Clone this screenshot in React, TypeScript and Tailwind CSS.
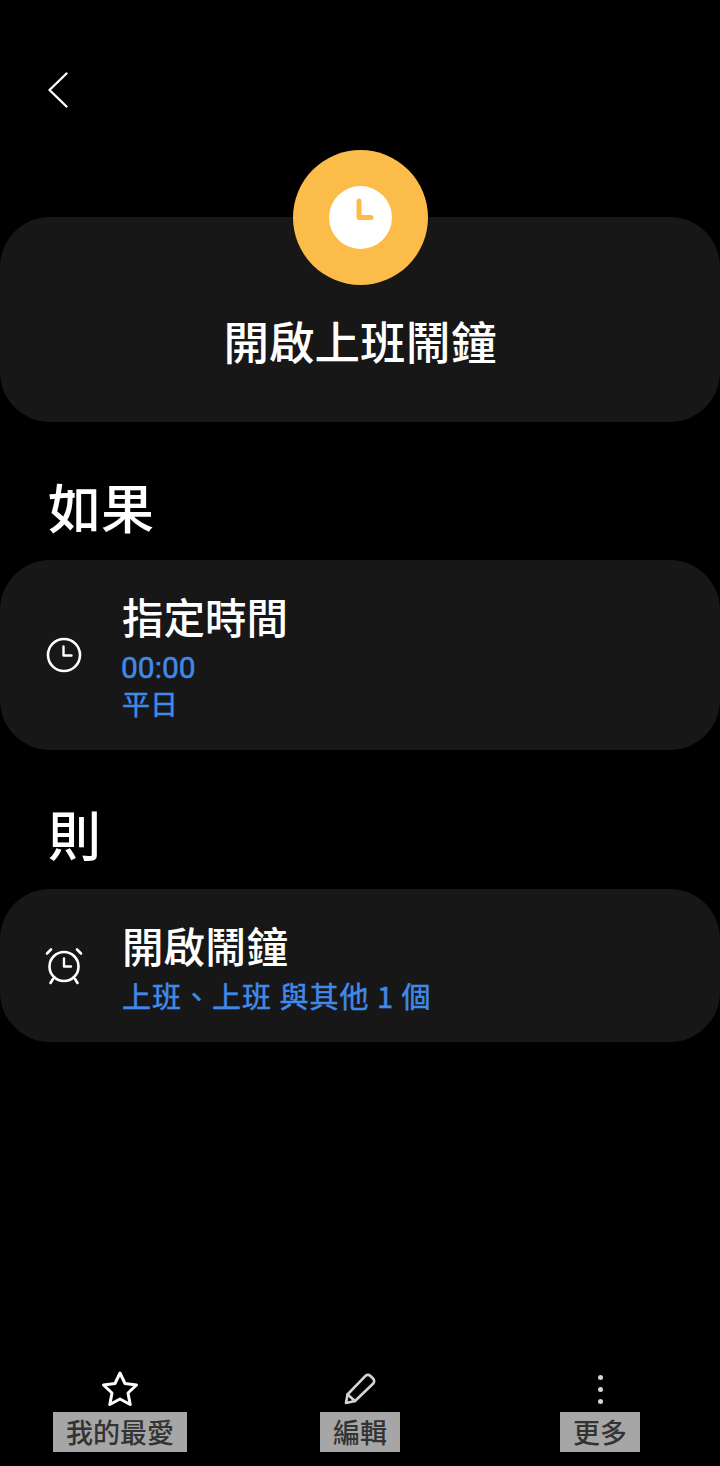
const cjk = "font-['Noto_Sans_CJK_TC','Noto_Sans',sans-serif]";

function ClockIcon() {
	return (
		<svg width="36" height="36" viewBox="0 0 36 36" fill="none" stroke="white" strokeWidth="2.6" strokeLinecap="round" strokeLinejoin="round">
			<circle cx="18" cy="18" r="16" />
			<path d="M17.5 9.5V18.5H25.5" strokeWidth="2.4" />
		</svg>
	);
}

function AlarmIcon() {
	return (
		<svg width="40" height="40" viewBox="0 0 40 40" fill="none" stroke="white" strokeWidth="2.6" strokeLinecap="round" strokeLinejoin="round">
			<circle cx="20" cy="20.5" r="14.5" />
			<path d="M20 12.5V20.5H27" strokeWidth="2.4" />
			<path d="M3 7.5L7 3.5M37 7.5L33 3.5M9 33L6.5 37M31 33L33.5 37" />
		</svg>
	);
}

function RuleCard({ title, className, children, icon }: { title: string; className: string; children: React.ReactNode; icon: React.ReactNode }) {
	return (
		<div className={`flex rounded-[50px] bg-[#171717] ${className}`}>
			<div className="flex w-[122px] shrink-0 items-center justify-center pl-[6px]">{icon}</div>
			<div className="flex flex-col pt-[32px] text-[#4189e8] [-webkit-text-stroke:0.5px_#4189e8]">
				<div className={`text-[41.5px] leading-[48px] font-medium text-white [-webkit-text-stroke:0] ${cjk}`}>{title}</div>
				{children}
			</div>
		</div>
	);
}

function ToolbarItem({ label, icon }: { label: string; icon: React.ReactNode }) {
	return (
		<div className="flex w-[240px] flex-col items-center">
			<div className="flex h-[40px] items-center justify-center pb-[6px]">{icon}</div>
			<div className={`flex h-[40px] items-center bg-[#a6a6a6] px-[13px] text-[27px] font-medium text-[#333333] ${cjk}`}>
				{label}
			</div>
		</div>
	);
}

export default function App() {
	return (
		<div className="flex h-[1466px] w-[720px] flex-col overflow-hidden bg-black">
			<div className="pt-[72px] pl-[47px]">
				<svg width="22" height="36" viewBox="0 0 22 36" fill="none" stroke="white" strokeWidth="2.4" strokeLinecap="round" strokeLinejoin="round">
					<path d="M19.5 1.5L2.5 18L19.5 34.5" />
				</svg>
			</div>

			<div className="relative mt-[109px] flex h-[205px] items-end justify-center rounded-[50px] bg-[#171717] pb-[53px]">
				<div className="absolute -top-[67px] left-[292.5px] flex h-[135px] w-[135px] items-center justify-center rounded-full bg-[#fbbc4a]">
					<div className="flex h-[63px] w-[63px] items-center justify-center rounded-full bg-white">
						<svg width="63" height="63" viewBox="0 0 63 63" fill="none" stroke="#fbbc4a" strokeWidth="5" strokeLinecap="round" strokeLinejoin="round">
							<path d="M30 15V31.5H42" />
						</svg>
					</div>
				</div>
				<div className={`text-[45.5px] leading-[58px] font-medium text-white ${cjk}`}>開啟上班鬧鐘</div>
			</div>

			<div className={`mt-[49px] pl-[48px] text-[53px] leading-[70px] font-medium text-white ${cjk}`}>如果</div>
			<RuleCard title="指定時間" icon={<ClockIcon />} className="mt-[19px] h-[190px]">
				<div className="mt-[11px] -ml-[1px] font-['Roboto',sans-serif] text-[30px] leading-[34px]">00:00</div>
				<div className={`text-[28px] leading-[36px] ${cjk}`}>平日</div>
			</RuleCard>

			<div className={`mt-[48px] pl-[48px] text-[53px] leading-[70px] font-medium text-white ${cjk}`}>則</div>
			<RuleCard title="開啟鬧鐘" icon={<AlarmIcon />} className="mt-[21px] h-[153px]">
				<div className={`mt-[8px] text-[29px] leading-[36px] tracking-[1px] ${cjk}`}>上班、上班 與其他 1 個</div>
			</RuleCard>

			<div className="mt-auto mb-[14px] flex">
				<ToolbarItem
					label="我的最愛"
					icon={
						<svg width="38" height="36" viewBox="0 0 38 36" fill="none" stroke="white" strokeWidth="3" strokeLinejoin="round">
							<path d="M19 2L24 12.5L35.5 14L27 22L29.2 33.5L19 28L8.8 33.5L11 22L2.5 14L14 12.5Z" />
						</svg>
					}
				/>
				<ToolbarItem
					label="編輯"
					icon={
						<svg width="32" height="32" viewBox="0 0 32 32" fill="none" stroke="#d4d4d4" strokeWidth="2.6" strokeLinejoin="round" strokeLinecap="round">
							<path d="M2 30L3.5 21.5L21.5 2.8Q24 1 26.5 3L29.5 6Q31 8.5 29 10.8L11 28Z" />
							<path d="M3.5 21.5L11 28" />
						</svg>
					}
				/>
				<ToolbarItem
					label="更多"
					icon={
						<div className="flex flex-col items-center gap-[7px]">
							<div className="h-[5px] w-[5px] rounded-full bg-[#d4d4d4]" />
							<div className="h-[5px] w-[5px] rounded-full bg-[#d4d4d4]" />
							<div className="h-[5px] w-[5px] rounded-full bg-[#d4d4d4]" />
						</div>
					}
				/>
			</div>
		</div>
	);
}
